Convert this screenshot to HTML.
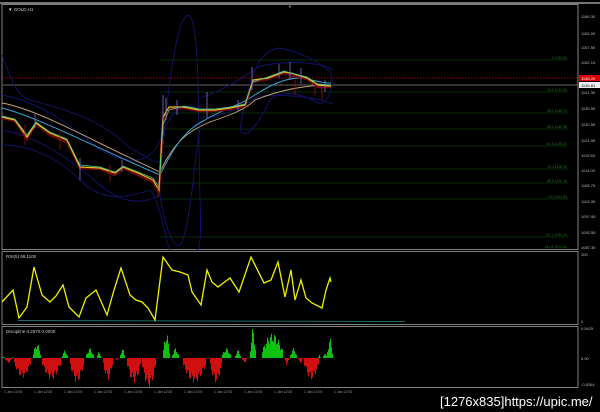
<!DOCTYPE html><html><head><meta charset="utf-8"><style>
html,body{margin:0;padding:0;background:#000;width:600px;height:412px;overflow:hidden}
svg{display:block}
text{font-family:"Liberation Sans",sans-serif}
</style></head><body>
<svg id="s" width="600" height="412" viewBox="0 0 600 412" xmlns="http://www.w3.org/2000/svg">
<rect width="600" height="412" fill="#000"/>
<line x1="0" y1="3" x2="600" y2="3" stroke="#9a9a9a" stroke-width="1.5"/>
<rect x="2" y="4.5" width="576" height="245" fill="none" stroke="#808080"/>
<rect x="2" y="251.5" width="576" height="73" fill="none" stroke="#808080"/>
<rect x="2" y="326.5" width="576" height="61" fill="none" stroke="#808080"/>
<text x="8" y="11" font-size="4.5" fill="#ccc">▼ GOLD,H1</text>
<text x="288" y="8" font-size="4" fill="#999">▼</text>
<g font-size="4" fill="#bbb">
<text x="581" y="18">1166.30</text><text x="581" y="35">1162.90</text><text x="581" y="49">1157.50</text><text x="581" y="64">1152.10</text>
<text x="581" y="94">1141.30</text><text x="581" y="110">1135.90</text><text x="581" y="126">1130.50</text><text x="581" y="142">1124.95</text>
<text x="581" y="157">1119.55</text><text x="581" y="172">1114.05</text><text x="581" y="187">1108.75</text><text x="581" y="203">1103.35</text>
<text x="581" y="218">1097.95</text><text x="581" y="234">1092.55</text><text x="581" y="249">1087.35</text>
<text x="581" y="256">100</text><text x="581" y="323">0</text>
<text x="581" y="330">0.5425</text><text x="581" y="360">0.00</text><text x="581" y="386">-0.5264</text>
</g>
<rect x="579" y="75" width="21" height="6" fill="#d00"/><text x="581" y="80" font-size="4" fill="#fff">1148.20</text>
<rect x="579" y="82" width="21" height="6" fill="#eee"/><text x="581" y="87" font-size="4" fill="#000">1145.81</text>
<line x1="3" y1="78" x2="578" y2="78" stroke="#c00" stroke-dasharray="1.5,1.5" stroke-width="0.8"/>
<line x1="3" y1="85" x2="578" y2="85" stroke="#888" stroke-width="0.8"/>
<g stroke="#0c3a0c" stroke-width="0.8">
<line x1="160" y1="60" x2="568" y2="60"/><line x1="160" y1="92" x2="568" y2="92"/><line x1="160" y1="113" x2="568" y2="113"/>
<line x1="160" y1="129" x2="568" y2="129"/><line x1="160" y1="146" x2="568" y2="146"/><line x1="160" y1="169" x2="568" y2="169"/>
<line x1="160" y1="183" x2="568" y2="183"/><line x1="160" y1="199" x2="568" y2="199"/><line x1="160" y1="237" x2="568" y2="237"/>
</g>
<g font-size="3.5" fill="#1d7a1d" text-anchor="end">
<text x="567" y="59">0 1163.00</text><text x="567" y="91">23.6 1141.06</text><text x="567" y="112">38.2 1136.74</text>
<text x="567" y="128">50.0 1130.98</text><text x="567" y="145">61.8 1125.22</text><text x="567" y="168">76.4 1118.02</text>
<text x="567" y="182">88.6 1112.10</text><text x="567" y="198">100 1104.03</text><text x="567" y="236">127.2 1091.11</text><text x="567" y="248">161.8 1074.30</text>
</g>
<g fill="none" stroke="#13136e" stroke-width="0.9">
<path d="M2,55 C10,75 15,95 30,100 C60,108 100,118 130,148 C150,158 158,168 162,158 C170,60 180,10 190,16 C200,30 198,120 200,200 C202,250 198,250 196,250"/>
<path d="M2,145 C20,145 50,150 80,180 C100,200 120,200 150,190 C160,200 165,240 170,250"/>
<path d="M2,130 C30,135 60,150 100,185 C130,210 150,200 160,195 C165,230 175,250 180,245 C190,235 195,150 200,130"/>
<path d="M2,95 C30,100 60,115 100,150 C130,165 150,165 160,140 C170,110 185,100 200,110"/>
<path d="M240,130 C250,70 260,50 280,48 C300,52 320,62 330,72 C335,85 330,100 320,104 C300,92 280,90 270,100 C255,130 245,140 240,130"/>
<path d="M200,98 C220,92 240,80 260,66 C290,60 320,62 333,70"/>
<path d="M200,118 C220,118 240,108 260,96 C290,94 320,98 333,104"/>
</g>
<path d="M2,103 C40,110 90,140 160,172 C175,140 190,130 210,122 C230,115 245,110 255,100 C275,92 300,85 331,85" fill="none" stroke="#c9a77a" stroke-width="0.9"/>
<path d="M2,108 C40,118 90,145 160,175 C175,145 185,130 205,120 C225,108 240,105 250,98 C270,85 285,78 300,78 C315,80 325,84 331,83" fill="none" stroke="#3aa0d8" stroke-width="1"/>
<polyline fill="none" stroke="#6a0a0a" stroke-width="2.5" points="2,118 15,121 27,139 36,124 50,135 67,142 80,168 100,169 115,175 123,168 138,175 153,182 159,192 163,120 169,109 184,108 199,111 215,111 230,109 245,106 253,82 268,79 284,73 291,75 307,79 318,87 331,87"/>
<polyline fill="none" stroke="#e8c020" stroke-width="1.2" points="2,117 15,120 27,137 36,123 50,133 67,140 80,167 100,168 115,173 123,167 138,173 153,180 159,190 163,117 169,107 184,107 199,110 215,110 230,108 245,105 253,80 268,78 284,72 291,73 307,78 318,85 331,86"/>
<polyline fill="none" stroke="#40d0a0" stroke-width="0.7" points="2,116 15,119 27,135 36,122 50,132 67,139 80,165 100,167 115,172 123,166 138,172 153,178 159,187 163,125 169,110 184,106 199,109 215,109 230,107 245,104 253,82 268,77 284,71 291,73 307,77 318,84 331,85"/>
<g stroke="#8a70d0" stroke-width="0.8">
<line x1="35" y1="114" x2="35" y2="128"/><line x1="80" y1="158" x2="80" y2="180"/><line x1="122" y1="160" x2="122" y2="172"/><line x1="163" y1="95" x2="163" y2="135"/><line x1="166" y1="98" x2="166" y2="120"/><line x1="177" y1="100" x2="177" y2="115"/><line x1="207" y1="92" x2="207" y2="118"/><line x1="238" y1="100" x2="238" y2="112"/><line x1="252" y1="67" x2="252" y2="90"/><line x1="279" y1="64" x2="279" y2="78"/><line x1="290" y1="62" x2="290" y2="80"/><line x1="301" y1="68" x2="301" y2="84"/><line x1="325" y1="80" x2="325" y2="92"/>
</g>
<g stroke="#a01010" stroke-width="0.8">
<line x1="25" y1="125" x2="25" y2="145"/><line x1="60" y1="130" x2="60" y2="150"/><line x1="110" y1="165" x2="110" y2="182"/><line x1="158" y1="180" x2="158" y2="198"/><line x1="295" y1="80" x2="295" y2="95"/><line x1="315" y1="82" x2="315" y2="95"/><line x1="322" y1="88" x2="322" y2="100"/>
</g>
<text x="6" y="258" font-size="4.5" fill="#ccc">RSI(5) 58.1100</text>
<line x1="18" y1="320.5" x2="405" y2="321.5" stroke="#1d6a6a" stroke-width="1"/>
<polyline fill="none" stroke="#f0f000" stroke-width="1.3" points="2,302 13,290 19,318 27,307 34,267 42,295 50,302 56,296 63,285 69,307 79,317 86,298 96,290 107,315 114,290 121,268 130,295 136,300 142,302 148,308 155,320 163,257 172,270 180,272 188,275 192,292 201,305 207,270 212,282 218,287 230,278 239,292 251,257 264,283 271,280 278,262 285,297 291,270 295,300 301,280 306,298 312,303 322,308 326,290 330,278 331,282"/>
<text x="6" y="333" font-size="4.5" fill="#ccc">Discipline 0.2670 0.0000</text>
<g id="bars"></g>
<g font-size="3.5" fill="#999" id="tl"></g>
<text x="440" y="406" font-size="13" fill="#fff" font-family="DejaVu Sans Mono,monospace">[1276x835]https://upic.me/</text>
</svg>
<script>
var segs=[[2,4,2],[5,11,-5],[12,13,2],[14,30,-20],[33,40,15],[42,60,-22],[62,67,8],[70,83,-25],[86,93,10],[97,100,8],[103,112,-22],[115,118,-2],[120,124,10],[127,140,-25],[142,155,-30],[163,169,25],[172,178,10],[183,205,-25],[210,221,-25],[222,230,10],[235,240,8],[242,246,-5],[250,255,30],[262,282,25],[285,288,-8],[290,296,10],[298,302,-5],[304,318,-22],[318,320,3],[323,326,6],[327,332,20]];
var g=document.getElementById('bars'),ns='http://www.w3.org/2000/svg',z=358;
segs.forEach(function(s){var n=s[1]-s[0];for(var x=s[0];x<=s[1];x++){var t=n?(x-s[0])/n:0.5;var h=Math.abs(s[2])*(0.35+0.65*Math.sin(Math.PI*t))*(0.8+0.2*Math.sin(x*1.7));var r=document.createElementNS(ns,'rect');r.setAttribute('x',x);r.setAttribute('width',1);if(s[2]>0){r.setAttribute('y',z-h);r.setAttribute('fill','#10c010');}else{r.setAttribute('y',z);r.setAttribute('fill','#d01010');}r.setAttribute('height',h);g.appendChild(r);}});
var tl=document.getElementById('tl');for(var i=0;i<12;i++){var t=document.createElementNS(ns,'text');t.setAttribute('x',4+i*30);t.setAttribute('y',393);t.textContent='1 Jan 12:00';tl.appendChild(t);}
</script>
</body></html>
